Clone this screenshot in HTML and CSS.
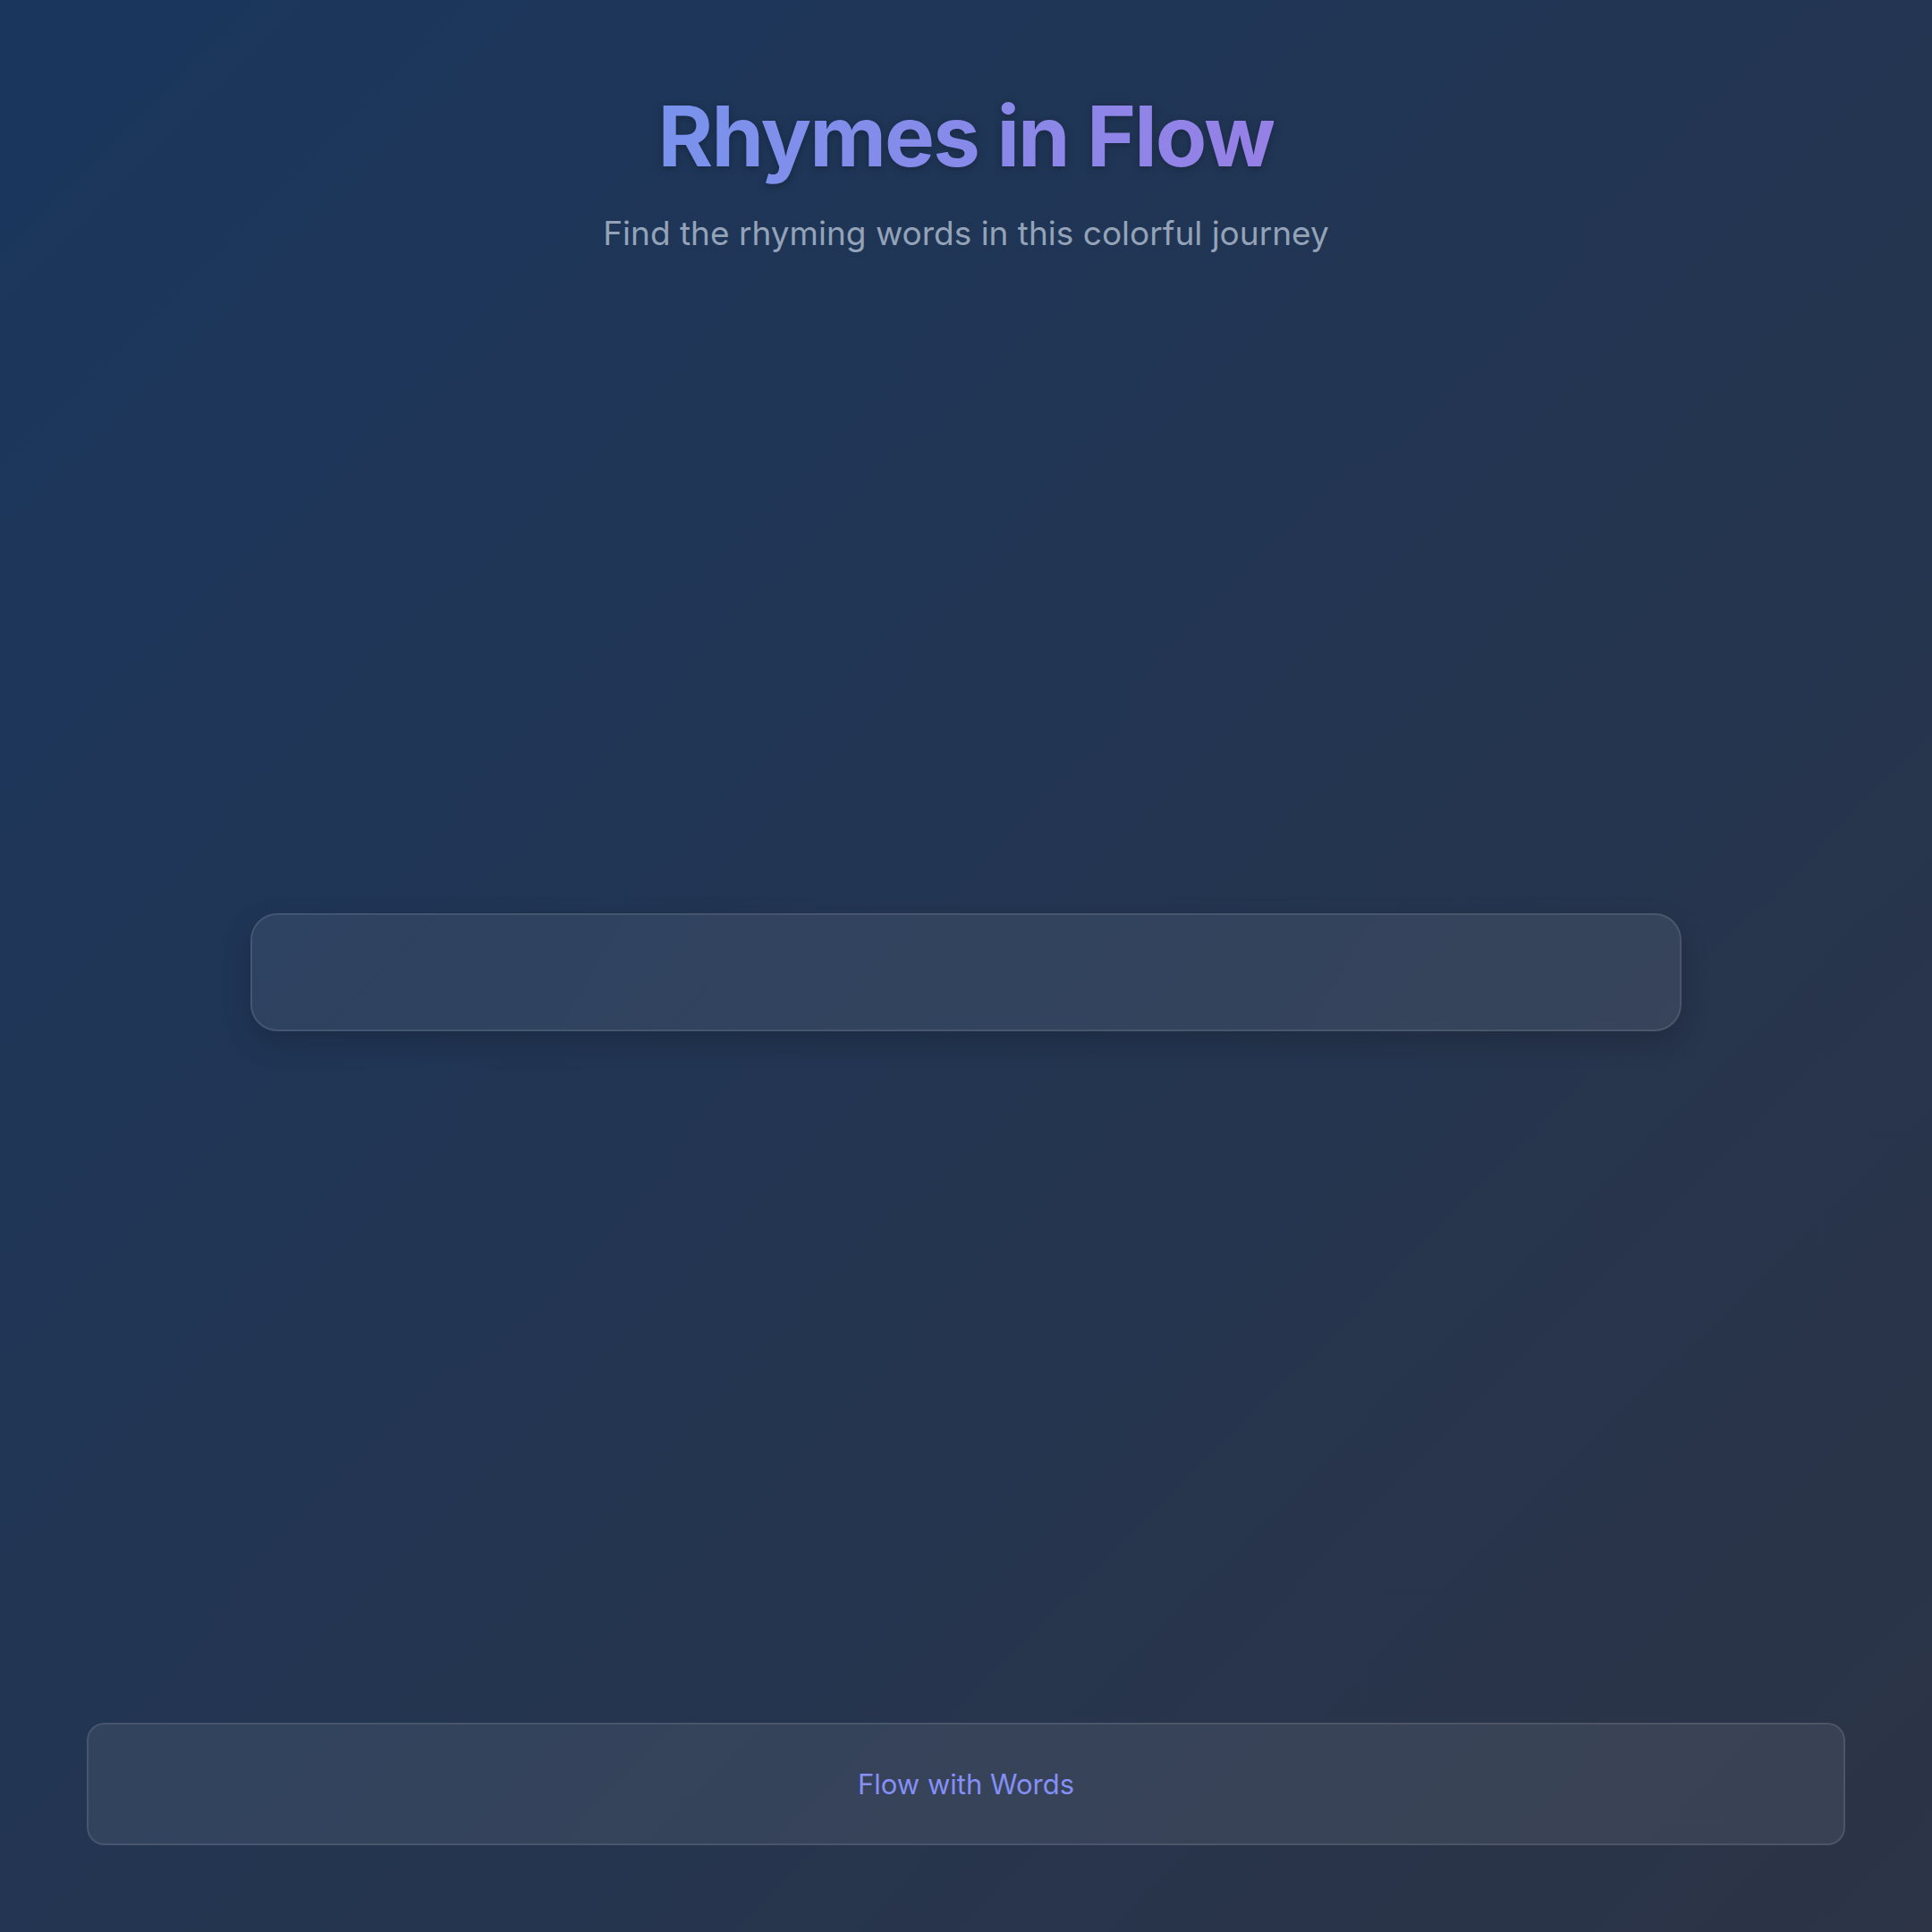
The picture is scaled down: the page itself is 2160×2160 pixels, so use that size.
FILE: index.html
```html
<!DOCTYPE html>
<html lang="en">
<head>
<meta charset="utf-8">
<title>Rhymes in Flow</title>
<link rel="stylesheet" href="styles.css">
</head>
<body>
<div class="page">
  <header class="header">
    <h1 class="title">Rhymes in Flow</h1>
    <p class="subtitle">Find the rhyming words in this colorful journey</p>
  </header>
  <main class="main">
    <div class="stage"></div>
  </main>
  <footer class="footer">
    <span class="footer-text">Flow with Words</span>
  </footer>
</div>
</body>
</html>
```
FILE: styles.css
```css
* { box-sizing: border-box; }
html, body { margin: 0; padding: 0; }
body {
  min-height: 100vh;
  font-family: Inter, "Noto Sans", "Liberation Sans", sans-serif;
  background: linear-gradient(135deg, #1a365d 0%, #2c3446 100%);
  color: #e2e8f0;
}
.page {
  min-height: 100vh;
  display: flex;
  flex-direction: column;
  padding: 96px 97px 97px;
}
.header {
  text-align: center;
}
.title {
  margin: 0;
  display: inline-block;
  font-size: 94px;
  font-weight: 700;
  line-height: 1.2;
  letter-spacing: -0.02em;
  background: linear-gradient(90deg, #7993ec 0%, #9680e6 100%);
  -webkit-background-clip: text;
  background-clip: text;
  color: transparent;
  filter: drop-shadow(0 2px 4px rgba(0, 0, 0, 0.25));
}
.subtitle {
  margin: 28px 0 0;
  font-size: 37px;
  letter-spacing: 0;
  color: #94a3b8;
  line-height: 1.3;
}
.main {
  flex: 1;
  display: flex;
  align-items: center;
  justify-content: center;
  padding: 40px 0 76px;
}
.stage {
  width: 1600px;
  height: 132px;
  border-radius: 30px;
  background: linear-gradient(120deg, rgba(255,255,255,0.065) 0%, rgba(255,255,255,0.075) 100%);
  border: 2px solid rgba(255, 255, 255, 0.1);
  box-shadow: 0 12px 32px rgba(0, 0, 0, 0.18);
}
.footer {
  height: 137px;
  display: flex;
  align-items: center;
  justify-content: center;
  border-radius: 20px;
  background: rgba(255, 255, 255, 0.07);
  border: 2px solid rgba(255, 255, 255, 0.1);
}
.footer-text {
  font-size: 31px;
  color: #858ff6;
}
```
